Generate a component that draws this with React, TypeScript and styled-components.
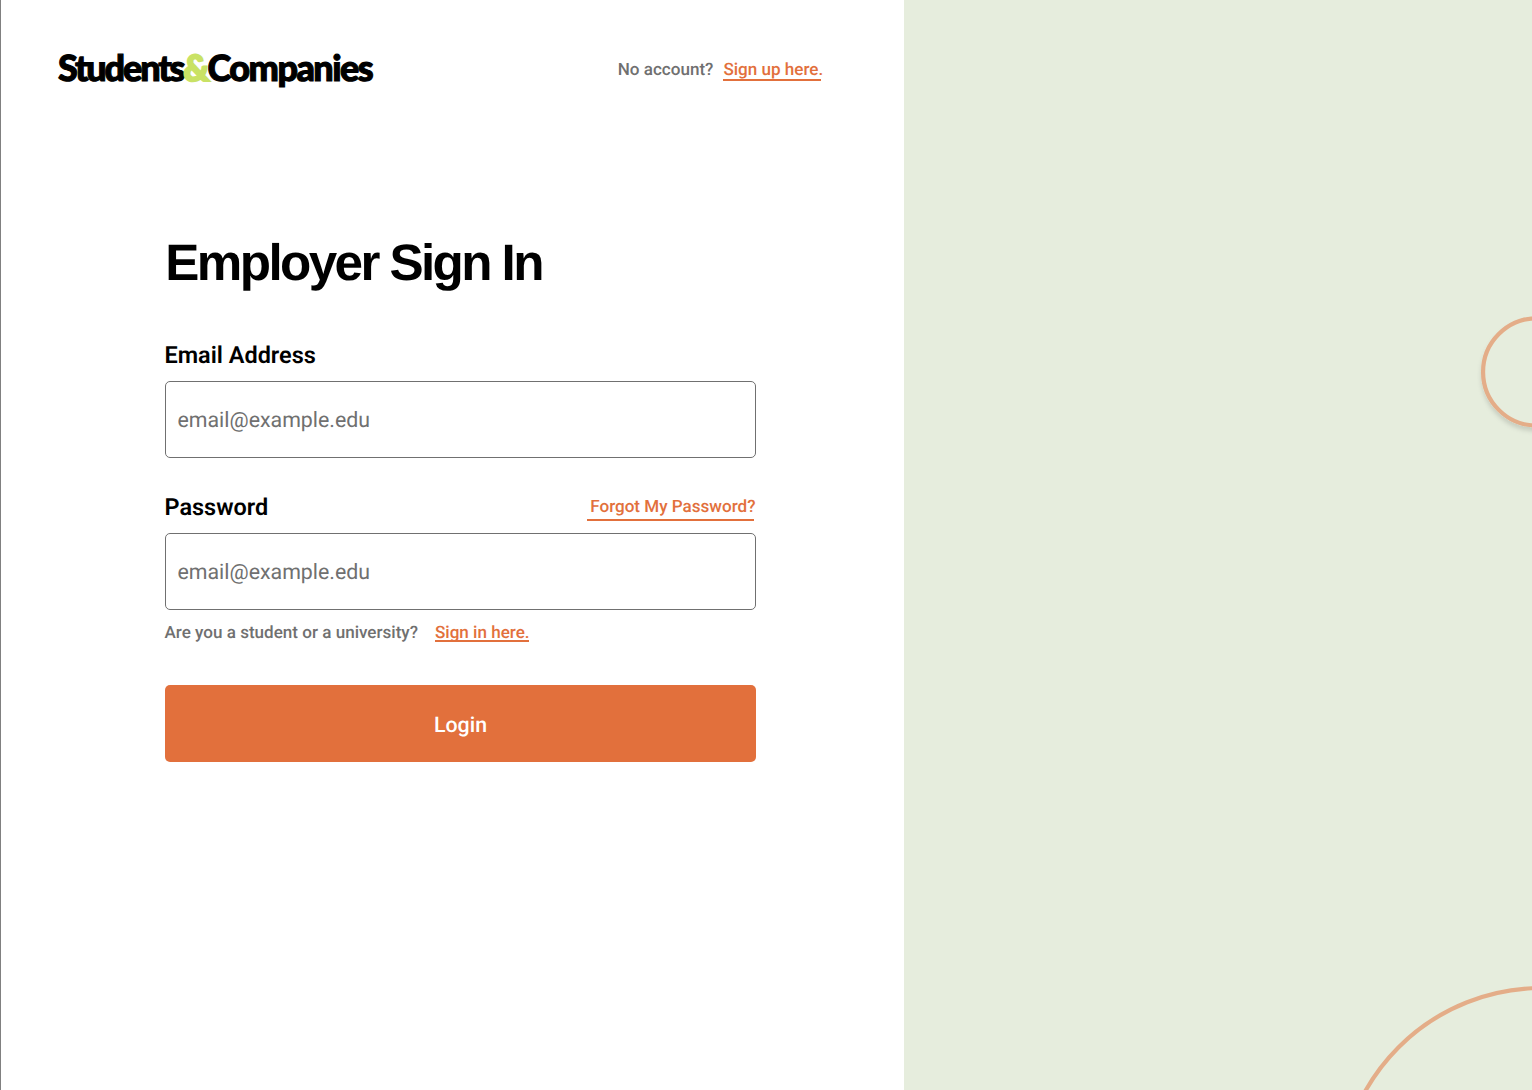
import React from "react";
import styled, { createGlobalStyle } from "styled-components";

const Global = createGlobalStyle`
  * { box-sizing: border-box; }
  body { margin: 0; background: #fff; font-family: Roboto, sans-serif; overflow: hidden; text-rendering: geometricPrecision; }
`;

const Page = styled.div`
  display: flex;
  width: 1532px;
  height: 1090px;
  overflow: hidden;
`;
const Main = styled.main`
  flex: none;
  width: 903.6px;
  border-left: 1px solid #808080;
  padding: 0 80.4px 0 57px;
`;
const Header = styled.header`
  display: flex;
  justify-content: space-between;
  align-items: center;
  height: 140px;
`;
const Logo = styled.div`
  font: 900 36px/44px Lato, sans-serif;
  letter-spacing: -1.55px;
  white-space: nowrap;
  color: #000;
  padding-bottom: 6px;
  -webkit-text-stroke: 1.1px currentColor;
`;
const Students = styled.span`
  letter-spacing: -2.15px;
`;
const Amp = styled.span`
  color: #c9e265;
  letter-spacing: -2px;
  -webkit-text-stroke: 2px currentColor;
`;
const Note = styled.p<{ $gap: number }>`
  display: flex;
  gap: ${(p) => p.$gap}px;
  margin: 0;
  font-size: 17.07px;
  line-height: 22px;
  font-weight: 500;
  color: #707070;
  white-space: nowrap;
`;
const Link = styled.a<{ $shift?: number; $drop?: number; $trim?: number }>`
  color: #e2703c;
  font-size: 17.07px;
  line-height: 22px;
  height: ${(p) => 20 + (p.$drop ?? 0)}px;
  font-weight: 500;
  white-space: nowrap;
  background: linear-gradient(#e2703c, #e2703c) left bottom / calc(100% - ${(p) => p.$trim ?? 0}px) 2px no-repeat;
  padding-left: ${(p) => p.$shift ?? 0}px;
`;
const Form = styled.form`
  display: flex;
  flex-direction: column;
  width: 591px;
  margin: 92px 0 0 106.5px;
`;
const Title = styled.h1`
  margin: 0 0 48px;
  padding: 1px 0 0 0.8px;
  font: 700 51.2px/60px "Liberation Sans", Arial, sans-serif;
  letter-spacing: -2.6px;
`;
const LabelRow = styled.div`
  display: flex;
  justify-content: space-between;
  align-items: flex-start;
  height: 40px;
`;
const Label = styled.label`
  font-size: 23.47px;
  line-height: 28px;
  font-weight: 600;
`;
const Forgot = styled(Link)`
  margin-top: 3px;
`;
const Input = styled.input`
  height: 77px;
  border: 1px solid #707070;
  border-radius: 5px;
  padding: 2px 12px 0;
  font: 400 21.33px Roboto, sans-serif;
  text-rendering: inherit;
  &::placeholder { color: #707070; opacity: 1; }
`;
const Field = styled.div`
  display: flex;
  flex-direction: column;
  & + & { margin-top: 35px; }
`;
const Hint = styled(Note)`
  margin-top: 12px;
  height: 20px;
`;
const Button = styled.button`
  height: 77px;
  margin-top: 43px;
  border: 0;
  border-radius: 5px;
  background: #e2703c;
  color: #fff;
  padding: 3px 0 0 1px;
  font: 500 21.33px Roboto, sans-serif;
  text-rendering: inherit;
`;
const Side = styled.aside`
  flex: 1;
  background: #e6eddd;
`;
const Art = styled.svg`
  display: block;
  width: 100%;
  height: 100%;
`;

export default function App() {
  return (
    <Page>
      <Global />
      <Main>
        <Header>
          <Logo><Students>Students</Students><Amp>&amp;</Amp>Companies</Logo>
          <Note $gap={10}>No account? <Link $drop={2} $trim={2}>Sign up here.</Link></Note>
        </Header>
        <Form>
          <Title>Employer Sign In</Title>
          <Field>
            <LabelRow><Label>Email Address</Label></LabelRow>
            <Input placeholder="email@example.edu" />
          </Field>
          <Field>
            <LabelRow>
              <Label>Password</Label>
              <Forgot $shift={3} $drop={5} $trim={2}>Forgot My Password?</Forgot>
            </LabelRow>
            <Input placeholder="email@example.edu" />
          </Field>
          <Hint $gap={17}>Are you a student or a university? <Link $trim={1}>Sign in here.</Link></Hint>
          <Button type="button">Login</Button>
        </Form>
      </Main>
      <Side>
        <Art viewBox="904 0 628 1090" preserveAspectRatio="xMinYMin slice">
          <defs>
            <filter id="drop" x="-20%" y="-20%" width="140%" height="140%">
              <feDropShadow dx="0" dy="4" stdDeviation="2" floodOpacity="0.13" />
            </filter>
          </defs>
          <g stroke="#e4ad88" strokeWidth="4.2">
            <circle cx="1536.3" cy="371.7" r="53.6" fill="#e6eddd" filter="url(#drop)" />
            <circle cx="1541" cy="1189.2" r="201.8" fill="none" />
          </g>
        </Art>
      </Side>
    </Page>
  );
}
